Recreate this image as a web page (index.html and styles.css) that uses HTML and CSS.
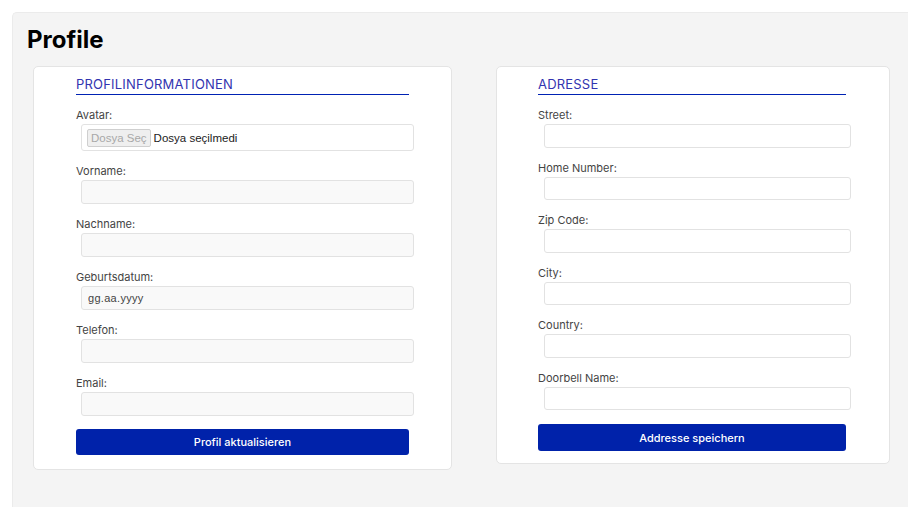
FILE: index.html
```html
<!DOCTYPE html>
<html lang="de">
<head>
<meta charset="utf-8">
<title>Profile</title>
<link rel="stylesheet" href="styles.css">
</head>
<body>
<main class="page">
  <h1 class="title">Profile</h1>
  <div class="cards">
    <section class="card card-profile">
      <h2 class="card-heading">Profilinformationen</h2>
      <div class="field">
        <label class="label">Avatar:</label>
        <div class="file-input">
          <span class="file-btn">Dosya Seç</span>
          <span class="file-text">Dosya seçilmedi</span>
        </div>
      </div>
      <div class="field">
        <label class="label">Vorname:</label>
        <input class="input input-muted" type="text">
      </div>
      <div class="field">
        <label class="label">Nachname:</label>
        <input class="input input-muted" type="text">
      </div>
      <div class="field">
        <label class="label">Geburtsdatum:</label>
        <input class="input input-muted input-date" type="text" placeholder="gg.aa.yyyy">
      </div>
      <div class="field">
        <label class="label">Telefon:</label>
        <input class="input input-muted" type="text">
      </div>
      <div class="field">
        <label class="label">Email:</label>
        <input class="input input-muted" type="text">
      </div>
      <button class="btn btn-profile" type="button">Profil aktualisieren</button>
    </section>

    <section class="card card-address">
      <h2 class="card-heading">Adresse</h2>
      <div class="field">
        <label class="label">Street:</label>
        <input class="input input-light" type="text">
      </div>
      <div class="field">
        <label class="label">Home Number:</label>
        <input class="input input-light" type="text">
      </div>
      <div class="field">
        <label class="label">Zip Code:</label>
        <input class="input input-light" type="text">
      </div>
      <div class="field">
        <label class="label">City:</label>
        <input class="input input-light" type="text">
      </div>
      <div class="field">
        <label class="label">Country:</label>
        <input class="input input-light" type="text">
      </div>
      <div class="field">
        <label class="label">Doorbell Name:</label>
        <input class="input input-light" type="text">
      </div>
      <button class="btn btn-address" type="button">Addresse speichern</button>
    </section>
  </div>
</main>
</body>
</html>
```

FILE: styles.css
```css
html, body {
  margin: 0;
  padding: 0;
  background: #ffffff;
  overflow: hidden;
}

body {
  font-family: Inter, "Noto Sans", "Liberation Sans", sans-serif;
  color: #333333;
  padding: 12px 0 0 12px;
}

.page {
  background: #f4f4f4;
  border: 1px solid #ebebeb;
  border-right: none;
  border-bottom: none;
  border-radius: 5px 0 0 0;
  width: 896px;
  height: 495px;
  box-sizing: border-box;
  padding: 13px 0 0 14px;
}

.title {
  margin: 0;
  font-size: 24px;
  line-height: 28px;
  font-weight: 700;
  color: #000000;
}

.cards {
  display: flex;
  align-items: flex-start;
  gap: 44px;
  margin: 12px 0 0 6px;
}

.card {
  background: #ffffff;
  border: 1px solid #e4e4e4;
  border-radius: 5px;
  box-sizing: border-box;
}

.card-profile {
  width: 419px;
  padding: 9px 42px 14px 42px;
}

.card-address {
  width: 394px;
  padding: 9px 43px 12px 41px;
}

.card-heading {
  margin: 0 0 13px;
  font-size: 13px;
  line-height: 16px;
  font-weight: 400;
  letter-spacing: 0.2px;
  text-transform: uppercase;
  color: #3234b0;
  padding-bottom: 2px;
  border-bottom: 1px solid #0022b4;
}

.field {
  margin-bottom: 13px;
}

.label {
  display: block;
  font-size: 11px;
  line-height: 14px;
  color: #444444;
  margin-bottom: 2px;
}

.input {
  display: block;
  box-sizing: border-box;
  width: 100%;
  height: 24px;
  margin: 0 0 0 5px;
  border: 1px solid #e2e2e2;
  border-radius: 3px;
  padding: 0 6px;
  font-family: "Liberation Sans", Arial, sans-serif;
  font-size: 11px;
  color: #333333;
  outline: none;
}

.input-muted {
  background: #f9f9f9;
}

.input-light {
  background: #ffffff;
  height: 23.5px;
  margin-left: 6px;
  width: calc(100% - 1px);
}

.input-date::placeholder {
  color: #444444;
  letter-spacing: 0.3px;
}

.file-input {
  display: flex;
  align-items: center;
  gap: 3px;
  box-sizing: border-box;
  width: 100%;
  height: 27px;
  margin-left: 5px;
  border: 1px solid #e2e2e2;
  border-radius: 3px;
  background: #ffffff;
  padding: 0 5px;
  font-family: "Liberation Sans", Arial, sans-serif;
  font-size: 11.5px;
}

.file-btn {
  box-sizing: border-box;
  height: 18px;
  line-height: 16px;
  padding: 0 3px;
  background: #efefef;
  border: 1px solid #cfcfcf;
  border-radius: 2px;
  color: #a8a8a8;
}

.file-text {
  color: #222222;
}

.btn {
  display: block;
  width: 100%;
  border: none;
  border-radius: 3px;
  background: #0022aa;
  color: #ffffff;
  font-family: Inter, "Noto Sans", sans-serif;
  font-size: 11px;
  font-weight: 500;
  cursor: pointer;
}

.btn-profile {
  height: 26px;
  margin-top: 13px;
}

.btn-address {
  height: 27px;
  margin-top: 14px;
}
```
